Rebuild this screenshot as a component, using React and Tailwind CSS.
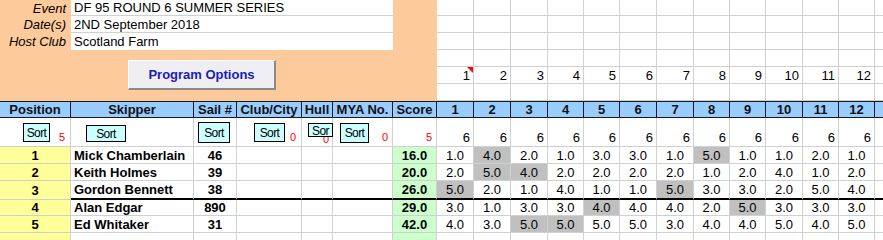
import React from "react";

const COLS =
  "grid grid-cols-[71px_123px_43px_65px_31px_60px_44px_37px_37px_37px_36px_36px_37px_37px_36px_36px_37px_36px_36px_40px]";
const RCOLS =
  "grid grid-cols-[37px_37px_37px_36px_36px_37px_37px_36px_36px_37px_36px_36px_40px]";
const GL = "border-r border-b border-[#d0d0d0]";

const races = [1, 2, 3, 4, 5, 6, 7, 8, 9, 10, 11, 12];

const data = [
  {
    pos: 1,
    name: "Mick Chamberlain",
    sail: "46",
    score: "16.0",
    r: [1, 4, 2, 1, 3, 3, 1, 5, 1, 1, 2, 1],
    d: [1, 7],
  },
  {
    pos: 2,
    name: "Keith Holmes",
    sail: "39",
    score: "20.0",
    r: [2, 5, 4, 2, 2, 2, 2, 1, 2, 4, 1, 2],
    d: [1, 2],
  },
  {
    pos: 3,
    name: "Gordon Bennett",
    sail: "38",
    score: "26.0",
    r: [5, 2, 1, 4, 1, 1, 5, 3, 3, 2, 5, 4],
    d: [0, 6],
    thick: true,
  },
  {
    pos: 4,
    name: "Alan Edgar",
    sail: "890",
    score: "29.0",
    r: [3, 1, 3, 3, 4, 4, 4, 2, 5, 3, 3, 3],
    d: [4, 8],
  },
  {
    pos: 5,
    name: "Ed Whitaker",
    sail: "31",
    score: "42.0",
    r: [4, 3, 5, 5, 5, 5, 3, 4, 4, 5, 4, 5],
    d: [2, 3],
  },
];

function SortBtn({ className, label = "Sort" }) {
  return (
    <div
      className={
        "absolute z-10 flex justify-center overflow-hidden border border-black bg-[#ccffff] text-[12px] leading-[14px] tracking-[-0.6px] text-black " +
        className
      }
    >
      {label}
    </div>
  );
}

function RedNum({ v, pr = "pr-[4px]" }) {
  return (
    <span className={"text-[11px] leading-none pb-[3px] text-[#ff0000] " + pr}>{v}</span>
  );
}

export default function App() {
  const topRowH = ["h-[16px]", "h-[17px]", "h-[17px]", "h-[17px]", "h-[17px]", "h-[17px]"];
  return (
    <div className="w-[883px] h-[240px] overflow-hidden bg-white font-['Liberation_Sans',Arial,sans-serif] text-[13px] text-black">
      {/* top section */}
      <div className="flex h-[101px]">
        <div className="w-[437px] shrink-0 bg-[#fdca9b] flex flex-col">
          {[
            ["Event", "DF 95 ROUND 6 SUMMER SERIES", "h-[16px]"],
            ["Date(s)", "2ND September 2018", "h-[17px]"],
            ["Host Club", "Scotland Farm", "h-[17px]"],
          ].map(([l, v, h], i) => (
            <div key={l} className={"flex " + h}>
              <div className="w-[71px] shrink-0 flex items-center justify-end pr-[5px] italic leading-none">
                {l}
              </div>
              <div
                className={
                  "w-[322px] shrink-0 bg-white flex items-center pl-[3px] leading-none whitespace-nowrap " +
                  (i < 2 ? "border-b border-[#d0d0d0]" : "")
                }
              >
                {v}
              </div>
            </div>
          ))}
          <div className="flex pt-[10px] pl-[128px]">
            <div className="w-[148px] h-[30px] flex items-center justify-center bg-[#efeff3] border-t border-l border-white border-r-2 border-b-2 border-r-[#8a8a8a] border-b-[#8a8a8a] font-bold text-[13px] text-[#1c1cb4] leading-none">
              Program Options
            </div>
          </div>
        </div>
        <div className="flex-1 flex flex-col">
          {topRowH.map((h, ri) => (
            <div key={ri} className={RCOLS + " " + h}>
              {races.map((n) => (
                <div
                  key={n}
                  className={GL + " relative flex items-center justify-end pr-[3px] leading-none"}
                >
                  {ri === 4 ? n : ""}
                  {ri === 4 && n === 1 ? (
                    <svg className="absolute right-0 top-0" width="6" height="6" viewBox="0 0 6 6">
                      <polygon points="0,0 6,0 6,6" fill="#ff0000" />
                    </svg>
                  ) : null}
                </div>
              ))}
              <div className={GL} />
            </div>
          ))}
        </div>
      </div>

      {/* header row */}
      <div className={COLS + " h-[17px]"}>
        {["Position", "Skipper", "Sail #", "Club/City", "Hull", "MYA No.", "Score"]
          .concat(races.map(String))
          .concat([""])
          .map((t, i) => (
            <div
              key={i}
              className="bg-[#99ccff] border-t border-b border-r border-[#1a1a1a] flex items-center justify-center font-bold text-[13px] leading-none whitespace-nowrap overflow-hidden text-[#111]"
            >
              {t}
            </div>
          ))}
      </div>

      {/* sort row */}
      <div className={COLS + " h-[29px]"}>
        <div className={GL + " relative flex items-end justify-end"}>
          <SortBtn className="left-[23px] top-[5px] w-[27px] h-[19px] items-center" />
          <RedNum v="5" pr="pr-[5px]" />
        </div>
        <div className={GL + " relative"}>
          <SortBtn className="left-[15px] top-[7px] w-[40px] h-[17px] items-center" />
        </div>
        <div className={GL + " relative"}>
          <SortBtn className="left-[4px] top-[4px] w-[32px] h-[21px] items-center" />
        </div>
        <div className={GL + " relative flex items-end justify-end"}>
          <SortBtn className="left-[17px] top-[5px] w-[31px] h-[19px] items-center" />
          <RedNum v="0" pr="pr-[5px]" />
        </div>
        <div className={GL + " relative flex items-end justify-end"}>
          <span className="text-[11px] leading-none pb-[1px] pr-[3px] text-[#ff0000]">0</span>
          <SortBtn className="left-[6px] top-[5px] w-[25px] h-[14px] items-start" label="Sor" />
        </div>
        <div className={GL + " relative flex items-end justify-end"}>
          <SortBtn className="left-[7px] top-[5px] w-[29px] h-[20px] items-center" />
          <RedNum v="0" />
        </div>
        <div className={GL + " flex items-end justify-end"}>
          <RedNum v="5" />
        </div>
        {races.map((n) => (
          <div key={n} className={GL + " flex items-end justify-end pr-[3px] pb-[2px] leading-none"}>
            6
          </div>
        ))}
        <div className={GL} />
      </div>

      {/* data rows */}
      {data.map((row) => {
        const tb = row.thick ? " border-b-2 border-b-black" : "";
        return (
          <div key={row.pos} className={COLS + " " + (row.thick ? "h-[19px]" : row.pos === 4 ? "h-[16px]" : "h-[17px]")}>
            <div className={GL + " bg-[#ffff99] flex items-center justify-center font-bold leading-none"}>
              {row.pos}
            </div>
            <div className={GL + tb + " flex items-center pl-[3px] font-bold leading-none whitespace-nowrap"}>
              {row.name}
            </div>
            <div className={GL + tb + " flex items-center justify-center font-bold leading-none"}>
              {row.sail}
            </div>
            <div className={GL + tb} />
            <div className={GL + tb} />
            <div className={GL + tb} />
            <div className={GL + tb + " bg-[#ccffcc] flex items-center justify-center font-bold leading-none"}>
              {row.score}
            </div>
            {row.r.map((v, i) => (
              <div
                key={i}
                className={
                  GL +
                  tb +
                  " flex items-center justify-center leading-none " +
                  (row.d.includes(i) ? "bg-[#c0c0c0]" : "")
                }
              >
                {v.toFixed(1)}
              </div>
            ))}
            <div className={GL + tb} />
          </div>
        );
      })}

      {/* trailing empty row */}
      <div className={COLS + " h-[17px]"}>
        <div className={GL + " bg-[#ffff99]"} />
        <div className={GL} />
        <div className={GL} />
        <div className={GL} />
        <div className={GL} />
        <div className={GL} />
        <div className={GL + " bg-[#ccffcc]"} />
        {races.map((n) => (
          <div key={n} className={GL} />
        ))}
        <div className={GL} />
      </div>
    </div>
  );
}
